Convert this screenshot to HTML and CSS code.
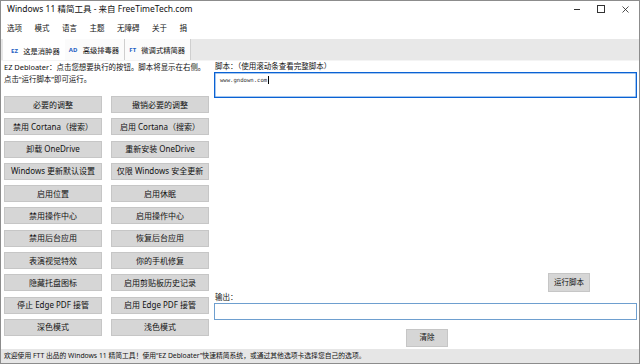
FILE: index.html
```html
<!DOCTYPE html>
<html lang="zh-CN">
  <head>
    <meta charset="UTF-8" />
    <meta name="viewport" content="width=device-width, initial-scale=1.0" />
    <title>Windows 11 精简工具</title>
    <link rel="stylesheet" href="styles.css">
  </head>
  <body>
    <div class="window">
      <div class="titlebar">
        <span class="title">Windows 11 精简工具 - 来自 FreeTimeTech.com</span>
        <div class="controls">
          <span class="ctl ctl-min"></span>
          <span class="ctl ctl-max"></span>
          <span class="ctl ctl-close">
            <svg width="7" height="7" viewBox="0 0 7 7">
              <path d="M0.5 0.5 L6.5 6.5 M6.5 0.5 L0.5 6.5" stroke="#222" stroke-width="0.8" fill="none" />
            </svg>
          </span>
        </div>
      </div>

      <ul class="menubar">
        <li>选项</li>
        <li>模式</li>
        <li>语言</li>
        <li>主题</li>
        <li>无障碍</li>
        <li>关于</li>
        <li>捐</li>
      </ul>

      <div class="tabs">
        <div class="tab active"><b>EZ</b>这是消肿器</div>
        <div class="tab"><b>AD</b>高级排毒器</div>
        <div class="tab"><b>FT</b>微调式精简器</div>
      </div>

      <div class="content">
        <div class="left">
          <p class="desc">EZ Debloater：点击您想要执行的按钮。脚本将显示在右侧。<br>点击“运行脚本”即可运行。</p>
          <div class="actions">
            <button>必要的调整</button>
            <button>撤销必要的调整</button>
            <button>禁用 Cortana（搜索）</button>
            <button>启用 Cortana（搜索）</button>
            <button>卸载 OneDrive</button>
            <button>重新安装 OneDrive</button>
            <button>Windows 更新默认设置</button>
            <button>仅限 Windows 安全更新</button>
            <button>启用位置</button>
            <button>启用休眠</button>
            <button>禁用操作中心</button>
            <button>启用操作中心</button>
            <button>禁用后台应用</button>
            <button>恢复后台应用</button>
            <button>表演视觉特效</button>
            <button>你的手机修复</button>
            <button>隐藏托盘图标</button>
            <button>启用剪贴板历史记录</button>
            <button>停止 Edge PDF 接管</button>
            <button>启用 Edge PDF 接管</button>
            <button>深色模式</button>
            <button>浅色模式</button>
          </div>
        </div>

        <div class="right">
          <div class="label">脚本：（使用滚动条查看完整脚本）</div>
          <div class="script-box"><span class="mono">www.gndown.com</span><span class="caret"></span></div>
          <div class="run-row">
            <button class="small-btn">运行脚本</button>
          </div>
          <div class="label">输出：</div>
          <div class="output-box"></div>
          <div class="clear-row">
            <button class="small-btn">清除</button>
          </div>
        </div>
      </div>

      <div class="statusbar">欢迎使用 FTT 出品的 Windows 11 精简工具！使用“EZ Debloater”快速精简系统，或通过其他选项卡选择您自己的选项。</div>
    </div>
  </body>
</html>
```

FILE: styles.css
```css
* {
  box-sizing: border-box;
}

body {
  margin: 0;
  background: #fff;
  font-family: "Noto Sans", "Noto Sans CJK SC", sans-serif;
  color: #111;
}

.window {
  width: 640px;
  height: 364px;
  border: 1px solid #8c8c8c;
  display: flex;
  flex-direction: column;
  background: #fff;
}

.titlebar {
  height: 16px;
  display: flex;
  align-items: center;
  justify-content: space-between;
  padding-left: 6px;
  font-size: 8.5px;
  line-height: 16px;
}

.controls {
  display: flex;
  align-items: center;
  height: 16px;
}

.ctl {
  width: 24px;
  height: 16px;
  display: flex;
  align-items: center;
  justify-content: center;
}

.ctl-min::before {
  content: "";
  width: 6px;
  height: 1px;
  background: #333;
}

.ctl-max::before {
  content: "";
  width: 6px;
  height: 6px;
  border: 1px solid #333;
}

.ctl-close {
  margin-right: 2px;
}

.menubar {
  list-style: none;
  margin: 0;
  padding: 0;
  height: 22px;
  display: flex;
  align-items: center;
  font-size: 7.5px;
}

.menubar li {
  padding: 0 6.5px 0 6px;
  line-height: 22px;
}

.tabs {
  height: 22px;
  background: #e8e8e8;
  display: flex;
  border-bottom: 1px solid #f4f4f4;
}

.tab {
  display: flex;
  align-items: center;
  padding: 0 5px 0 4px;
  font-size: 7.3px;
  border-right: 1px solid #cfcfcf;
  background: #fbfbfb;
}

.tab.active {
  margin-left: 2px;
  padding: 2px 5px 0 8px;
  border-right: none;
  background: #fff;
}

.tab b {
  color: #1f5fc4;
  font-size: 6px;
  font-weight: 700;
  margin-right: 5px;
  letter-spacing: 0.2px;
}

.content {
  flex: 1;
  display: flex;
  gap: 5px;
  padding: 0 2px 2px 3px;
}

.left {
  width: 205px;
  flex: none;
}

.desc {
  margin: 0;
  font-size: 7.45px;
  line-height: 12px;
  white-space: nowrap;
}

.actions {
  margin-top: 11px;
  display: grid;
  grid-template-columns: 98px 98px;
  grid-auto-rows: 17px;
  column-gap: 9px;
  row-gap: 5.3px;
}

button {
  font-family: "Noto Sans", "Noto Sans CJK SC", sans-serif;
  font-size: 8px;
  color: #111;
  background: #d6d6d6;
  border: 1px solid #c6c6c6;
  padding: 0;
  margin: 0;
  line-height: 1;
  cursor: pointer;
}

.right {
  flex: 1;
  display: flex;
  flex-direction: column;
}

.label {
  font-size: 7.5px;
  line-height: 11px;
  padding-left: 1px;
}

.script-box {
  height: 26px;
  border: 1px solid #0a62d4;
  box-shadow: inset 0 0 0 0.5px #4d8fe0;
  padding: 3px 5px;
  display: flex;
  align-items: flex-start;
}

.mono {
  font-family: "DejaVu Sans Mono", monospace;
  font-size: 5.6px;
  line-height: 8px;
  color: #333;
}

.caret {
  width: 1px;
  height: 8px;
  background: #000;
  margin-left: 1px;
}

.run-row {
  margin-top: auto;
  display: flex;
  justify-content: flex-end;
  padding-right: 47px;
}

.small-btn {
  width: 42px;
  height: 19px;
  font-size: 7.5px;
}

.output-box {
  height: 17px;
  border: 1px solid #6e9fcf;
}

.clear-row {
  margin-top: 9px;
  display: flex;
  justify-content: center;
  padding-left: 3px;
}

.clear-row .small-btn {
  height: 18px;
}

.statusbar {
  height: 14px;
  background: #e6e6e6;
  font-size: 6.8px;
  line-height: 14px;
  padding-left: 3px;
  white-space: nowrap;
  overflow: hidden;
}
```
